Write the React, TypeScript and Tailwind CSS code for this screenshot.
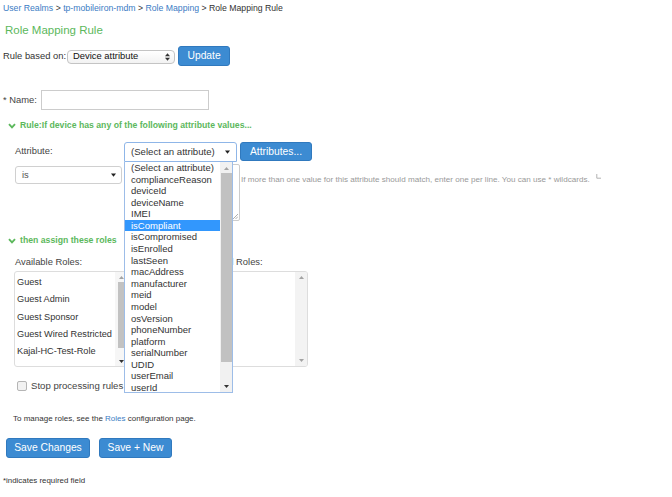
import React from 'react';

const ATTRS = [
  '(Select an attribute)',
  'complianceReason',
  'deviceId',
  'deviceName',
  'IMEI',
  'isCompliant',
  'isCompromised',
  'isEnrolled',
  'lastSeen',
  'macAddress',
  'manufacturer',
  'meid',
  'model',
  'osVersion',
  'phoneNumber',
  'platform',
  'serialNumber',
  'UDID',
  'userEmail',
  'userId',
];

const ROLES = ['Guest', 'Guest Admin', 'Guest Sponsor', 'Guest Wired Restricted', 'Kajal-HC-Test-Role', 'Users'];

function Chevron() {
  return (
    <svg width="8" height="6" viewBox="0 0 8 6">
      <path d="M1 1.2 L4 4.3 L7 1.2" stroke="#5cb85c" strokeWidth="1.9" fill="none" />
    </svg>
  );
}

function Caret({ color = '#222' }: { color?: string }) {
  return (
    <svg width="5" height="4" viewBox="0 0 5 4">
      <path d="M0 0.5 L5 0.5 L2.5 3.7 Z" fill={color} />
    </svg>
  );
}

function ArrowUp() {
  return (
    <svg width="5" height="3" viewBox="0 0 5 3">
      <path d="M0 3 L5 3 L2.5 0 Z" fill="#a3a3a3" />
    </svg>
  );
}

function ArrowDown({ color = '#a3a3a3' }: { color?: string }) {
  return (
    <svg width="5" height="3" viewBox="0 0 5 3">
      <path d="M0 0 L5 0 L2.5 3 Z" fill={color} />
    </svg>
  );
}

function Button({ label, w }: { label: string; w: string }) {
  return (
    <div
      className={`${w} flex h-full items-center justify-center rounded-[3px] border border-[#3079be] bg-[#3c8bd2] text-[10.3px] text-white`}
    >
      {label}
    </div>
  );
}

export default function App() {
  return (
    <div className="relative h-[497px] w-[672px] overflow-hidden bg-white pt-[3px] font-['Liberation_Sans',Arial,sans-serif] text-[#333]">
      {/* breadcrumb */}
      <div className="ml-[3px] flex h-[12px] items-center whitespace-pre text-[8.7px] text-[#333]">
        <span className="text-[#3b7cc4]">User Realms</span>
        <span> &gt; </span>
        <span className="text-[#3b7cc4]">tp-mobileiron-mdm</span>
        <span> &gt; </span>
        <span className="text-[#3b7cc4]">Role Mapping</span>
        <span> &gt; </span>
        <span>Role Mapping Rule</span>
      </div>

      <div className="ml-[5px] mt-[9px] flex h-[14px] items-center text-[11.5px] text-[#5cb85c]">Role Mapping Rule</div>

      {/* rule based on */}
      <div className="ml-[3px] mt-[8px] flex h-[20px] items-center">
        <span className="text-[9.4px]">Rule based on:</span>
        <div className="ml-[1px] mt-[1px] flex h-[14px] w-[108px] items-center justify-between rounded-[4px] border border-[#c4c4c4] bg-gradient-to-b from-white to-[#f2f2f2] pl-[5px] pr-[4px] text-[9.4px] text-[#111]">
          <span>Device attribute</span>
          <svg width="5" height="8" viewBox="0 0 5 8">
            <path d="M0 3.2 L5 3.2 L2.5 0.2 Z" fill="#333" />
            <path d="M0 4.8 L5 4.8 L2.5 7.8 Z" fill="#333" />
          </svg>
        </div>
        <div className="ml-[3px] h-[20px]">
          <Button label="Update" w="w-[52px]" />
        </div>
      </div>

      {/* name */}
      <div className="ml-[3px] mt-[24px] flex h-[20px] items-center">
        <span className="text-[9.4px] text-[#444]">* Name:</span>
        <div className="ml-[4px] h-[20px] w-[168px] border border-[#ccc] bg-white" />
      </div>

      {/* rule header */}
      <div className="ml-[8px] mt-[10px] flex h-[12px] items-center gap-[4px]">
        <Chevron />
        <span className="text-[8.7px] font-bold text-[#5cb85c]">Rule:If device has any of the following attribute values...</span>
      </div>

      {/* attribute row */}
      <div className="mt-[9px] flex h-[21px] items-center">
        <span className="ml-[15px] w-[109px] text-[9.4px] text-[#444]">Attribute:</span>
        <div className="mt-[1px] flex h-[20px] w-[113px] items-center justify-between rounded-t-[3px] border border-[#8fb6e8] bg-white pl-[6px] pr-[6px] text-[9.6px] text-[#333]">
          <span>(Select an attribute)</span>
          <Caret />
        </div>
        <div className="ml-[3px] h-[19px]">
          <Button label="Attributes..." w="w-[72px]" />
        </div>
      </div>

      {/* is + values */}
      <div className="mt-[2px] flex h-[57px] items-start">
        <div className="ml-[15px] mt-[2px] flex h-[18px] w-[107px] items-center justify-between rounded-[3px] border border-[#d0d0d0] bg-white pl-[6px] pr-[5px] text-[9.4px] text-[#555]">
          <span>is</span>
          <Caret />
        </div>
        <div className="relative ml-[2px] h-[57px] w-[116px] rounded-[2px] border border-[#ccc] bg-white">
          <svg className="absolute bottom-[1px] right-[1px]" width="6" height="6" viewBox="0 0 6 6">
            <path d="M1 6 L6 1 M3.5 6 L6 3.5" stroke="#999" strokeWidth="0.8" />
          </svg>
        </div>
        <span className="ml-[1px] mt-[11px] whitespace-nowrap text-[8.1px] leading-[10px] text-[#999]">
          If more than one value for this attribute should match, enter one per line. You can use * wildcards.
        </span>
        <svg className="ml-[6px] mt-[10px]" width="5" height="5" viewBox="0 0 5 5">
          <path d="M0.8 0 L0.8 4.2 L5 4.2" stroke="#aaa" strokeWidth="0.9" fill="none" />
        </svg>
      </div>

      {/* roles header */}
      <div className="ml-[8px] mt-[14px] flex h-[12px] items-center gap-[4px]">
        <Chevron />
        <span className="text-[8.7px] font-bold text-[#5cb85c]">then assign these roles</span>
      </div>

      <div className="mt-[9px] flex h-[12px] items-center text-[9.4px] text-[#444]">
        <span className="ml-[15px] w-[182px]">Available Roles:</span>
        <span>Selected Roles:</span>
      </div>

      {/* role lists */}
      <div className="mt-[3px] flex h-[96px]">
        <div className="ml-[14px] flex h-[96px] w-[114px] overflow-hidden rounded-[3px] border border-[#ddd] bg-white">
          <div className="min-w-0 flex-1 overflow-hidden pt-[2px] pl-[2px] text-[9.2px] text-[#333]">
            {ROLES.map((r) => (
              <div key={r} className="flex h-[17.4px] items-center whitespace-nowrap">
                {r}
              </div>
            ))}
          </div>
          <div className="flex w-[12px] flex-col items-center bg-[#f6f6f6] pt-[4px] pb-[3px]">
            <ArrowUp />
            <div className="mt-[3px] h-[66px] w-[7px] bg-[#c2c2c2]" />
            <div className="flex-1" />
            <ArrowDown color="#333" />
          </div>
        </div>
        <div className="ml-[68px] flex h-[96px] w-[112px] justify-end overflow-hidden rounded-[3px] border border-[#ddd] bg-white">
          <div className="flex w-[12px] flex-col items-center justify-between bg-[#f3f3f3] pt-[4px] pb-[4px]">
            <ArrowUp />
            <ArrowDown />
          </div>
        </div>
      </div>

      {/* stop processing */}
      <div className="ml-[17px] mt-[12px] flex h-[14px] items-center">
        <div className="h-[10px] w-[10px] rounded-[2px] border border-[#b5b5b5] bg-[#f2f2f2]" />
        <span className="ml-[4px] whitespace-nowrap text-[9.6px] text-[#444]">Stop processing rules</span>
      </div>

      <div className="ml-[13px] mt-[20px] flex h-[12px] items-center text-[8px] text-[#333]">
        <span className="whitespace-pre">
          To manage roles, see the <span className="text-[#3b7cc4]">Roles</span> configuration page.
        </span>
      </div>

      <div className="ml-[6px] mt-[13px] flex h-[20px] gap-[9px]">
        <Button label="Save Changes" w="w-[84px]" />
        <Button label="Save + New" w="w-[73px]" />
      </div>

      <div className="ml-[3px] mt-[17px] flex h-[12px] items-center text-[7.9px] text-[#333]">*indicates required field</div>

      {/* open attribute dropdown */}
      <div className="absolute left-[124px] top-[162px] flex h-[231px] w-[109px] border-x border-b border-[#9dbde8] bg-white">
        <div className="min-w-0 flex-1 overflow-hidden text-[9.5px] text-[#333]">
          {ATTRS.map((a) => (
            <div
              key={a}
              className={`h-[11.58px] whitespace-nowrap pl-[6px] leading-[11.58px] ${a === 'isCompliant' ? 'bg-[#3297fd] text-white' : ''}`}
            >
              {a}
            </div>
          ))}
        </div>
        <div className="flex w-[12px] flex-col items-center bg-[#f1f1f1] pt-[5px] pb-[4px]">
          <ArrowUp />
          <div className="mt-[3px] h-[189px] w-[11px] bg-[#c1c1c1]" />
          <div className="flex-1" />
          <ArrowDown color="#333" />
        </div>
      </div>
    </div>
  );
}
